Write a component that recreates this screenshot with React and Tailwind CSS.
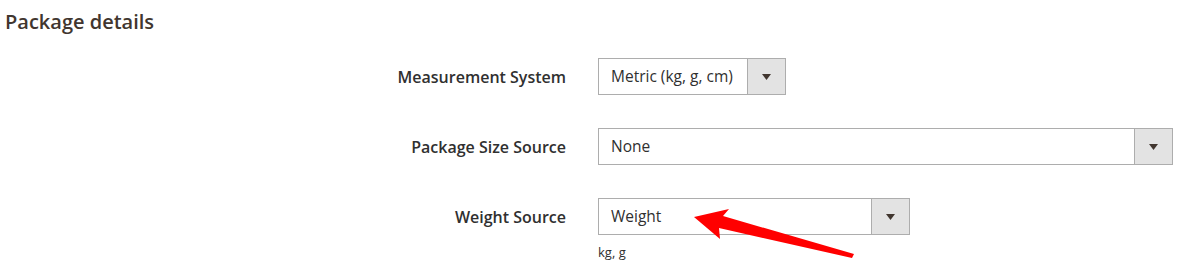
import React from "react";

function Select({ value, width }) {
  return (
    <div className={`flex h-[37px] border border-[#adadad] bg-white ${width}`}>
      <div className="flex flex-1 items-center pl-[12px] text-[15.5px] text-[#303030]">{value}</div>
      <div className="flex w-[38px] items-center justify-center border-l border-[#adadad] bg-[#e3e3e3]">
        <svg width="9" height="6" viewBox="0 0 9 6">
          <path d="M0 0 L9 0 L4.5 6 Z" fill="#41362f" />
        </svg>
      </div>
    </div>
  );
}

function Row({ label, children }) {
  return (
    <div className="flex items-start">
      <div className="flex h-[37px] w-[566px] items-center justify-end text-[16px] font-semibold text-[#303030]">
        {label}
      </div>
      <div className="ml-[32px]">{children}</div>
    </div>
  );
}

export default function App() {
  return (
    <div
      className="relative h-[276px] w-[1190px] overflow-hidden bg-white"
      style={{ fontFamily: '"Open Sans", sans-serif' }}
    >
      <h2 className="pl-[5px] pt-[8px] text-[20px] font-semibold leading-[28px] text-[#41362f]">Package details</h2>
      <div className="mt-[22px] flex flex-col gap-[33px]">
        <Row label="Measurement System">
          <Select value="Metric (kg, g, cm)" width="w-[188px]" />
        </Row>
        <Row label="Package Size Source">
          <Select value="None" width="w-[575px]" />
        </Row>
        <Row label="Weight Source">
          <div>
            <Select value="Weight" width="w-[312px]" />
            <div className="mt-[8px] text-[13px] leading-[18px] text-[#303030]">kg, g</div>
          </div>
        </Row>
      </div>
      <svg className="absolute left-0 top-0" width="1190" height="276" viewBox="0 0 1190 276">
        <path
          d="M694 217 L729 209 L723 216 L854 254 L852 258 L719 228 L720 239 Z"
          fill="#ff0000"
        />
      </svg>
    </div>
  );
}
